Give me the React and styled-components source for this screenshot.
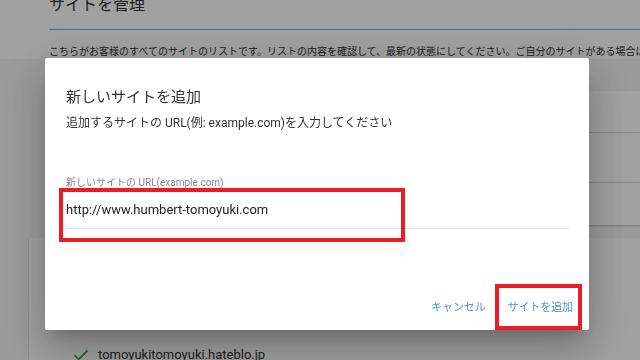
import React from "react";
import styled, { createGlobalStyle } from "styled-components";

const Global = createGlobalStyle`
  html, body { margin: 0; padding: 0; }
  body {
    width: 640px;
    height: 360px;
    overflow: hidden;
    background: #ffffff;
    font-family: Roboto, "Noto Sans CJK JP", sans-serif;
    color: #333;
  }
`;

const Page = styled.div`
  width: 640px;
  height: 360px;
  overflow: hidden;
  display: flex;
  flex-direction: column;
`;

const Top = styled.div`
  padding-left: 49px;
  background: #fff;
`;

const Header = styled.div`
  margin-top: -5px;
  padding-bottom: 14px;
  border-bottom: 1px solid #8ca5db;
`;

const PageTitle = styled.h1`
  margin: 0;
  font-size: 16px;
  line-height: 20px;
  font-weight: 400;
  color: #333;
`;

const Description = styled.p`
  margin: 15px 0 0;
  font-size: 10px;
  line-height: 14px;
  white-space: nowrap;
  color: #333;
`;

const Content = styled.div`
  flex: 1;
  background: #f6f6f6;
  padding: 32px 0 0 29px;
  display: flex;
  flex-direction: column;
  gap: 13px;
`;

const Card = styled.div`
  margin-left: ${(p) => p.$indent || 0}px;
  background: #fff;
  box-shadow: 0 1px 2px rgba(0, 0, 0, 0.25);
  display: flex;
  flex-direction: column;
`;

const TableRow = styled.div`
  height: ${(p) => p.$h}px;
  border-bottom: 1px solid #dcdcdc;
  &:last-child { border-bottom: none; }
`;

const SiteItem = styled.div`
  display: flex;
  align-items: center;
  gap: 9px;
  padding: 108px 0 0 44px;
  font-size: 13px;
  line-height: 18px;
  color: #333;
`;

const Overlay = styled.div`
  position: fixed;
  inset: 0;
  background: rgba(0, 0, 0, 0.37);
`;

const Dialog = styled.div`
  margin: 58px 0 0 45px;
  width: 544px;
  height: 272px;
  box-sizing: border-box;
  background: #fff;
  border-radius: 2px;
  box-shadow: 0 11px 15px -7px rgba(0, 0, 0, 0.2),
    0 24px 38px 3px rgba(0, 0, 0, 0.14), 0 9px 46px 8px rgba(0, 0, 0, 0.12);
  padding: 28px 20px 8px 21px;
  display: flex;
  flex-direction: column;
`;

const DialogTitle = styled.h2`
  margin: 0;
  font-size: 15px;
  line-height: 22px;
  font-weight: 400;
  color: #333;
`;

const DialogText = styled.p`
  margin: 6px 0 0;
  font-size: 12px;
  line-height: 18px;
  color: #333;
`;

const Field = styled.div`
  margin-top: 44px;
  display: flex;
  flex-direction: column;
`;

const FieldLabel = styled.label`
  font-size: 10px;
  line-height: 14px;
  color: #8a8a8a;
`;

const InputWrap = styled.div`
  position: relative;
  padding: 11px 0 9px;
  border-bottom: 1px solid #dedede;
`;

const InputValue = styled.div`
  font-size: 13px;
  line-height: 18px;
  color: #222;
`;

const Highlight = styled.span`
  position: absolute;
  left: ${(p) => p.$l}px;
  top: ${(p) => p.$t}px;
  width: ${(p) => p.$w}px;
  height: ${(p) => p.$h}px;
  box-sizing: border-box;
  border: 4px solid #ec1c24;
  pointer-events: none;
`;

const Actions = styled.div`
  margin-top: auto;
  display: flex;
  justify-content: flex-end;
  gap: 10px;
  margin-right: -10px;
`;

const TextButton = styled.button`
  position: relative;
  border: none;
  background: none;
  padding: 6px 6px;
  font-family: Roboto, "Noto Sans CJK JP", sans-serif;
  font-size: 11px;
  line-height: 16px;
  letter-spacing: -0.1px;
  color: #4d8ff0;
  cursor: pointer;
`;

const Check = () => (
  <svg width="16" height="12" viewBox="0 0 16 12" fill="none">
    <path d="M1.5 6.2 L5.8 10.3 L14.5 1.5" stroke="#34a853" strokeWidth="1.8" />
  </svg>
);

export default function App() {
  return (
    <>
      <Global />
      <Page>
        <Top>
          <Header>
            <PageTitle>サイトを管理</PageTitle>
          </Header>
          <Description>
            こちらがお客様のすべてのサイトのリストです。リストの内容を確認して、最新の状態にしてください。ご自分のサイトがある場合は
          </Description>
        </Top>
        <Content>
          <Card $indent={20}>
            <TableRow $h={41} />
            <TableRow $h={49} />
            <TableRow $h={42} />
          </Card>
          <Card>
            <SiteItem>
              <Check />
              <span>tomoyukitomoyuki.hateblo.jp</span>
            </SiteItem>
          </Card>
        </Content>
      </Page>
      <Overlay>
        <Dialog>
          <DialogTitle>新しいサイトを追加</DialogTitle>
          <DialogText>追加するサイトの URL(例: example.com)を入力してください</DialogText>
          <Field>
            <FieldLabel>新しいサイトの URL(example.com)</FieldLabel>
            <InputWrap>
              <InputValue>http://www.humbert-tomoyuki.com</InputValue>
              <Highlight $l={-7} $t={-2} $w={346} $h={54} />
            </InputWrap>
          </Field>
          <Actions>
            <TextButton>キャンセル</TextButton>
            <TextButton>
              サイトを追加
              <Highlight $l={-7} $t={-10} $w={87} $h={46} />
            </TextButton>
          </Actions>
        </Dialog>
      </Overlay>
    </>
  );
}
